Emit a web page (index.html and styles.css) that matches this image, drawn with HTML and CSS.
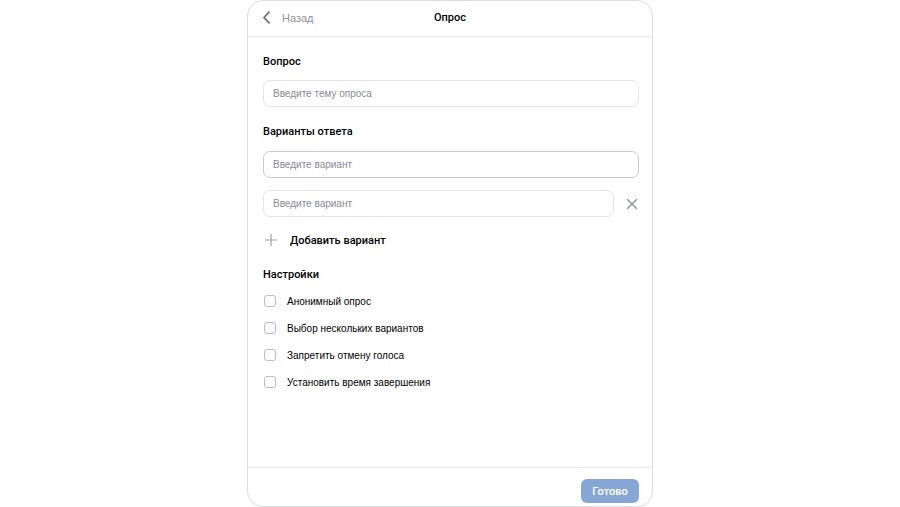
FILE: index.html
```html
<!DOCTYPE html>
<html lang="ru">
<head>
<meta charset="utf-8">
<title>Опрос</title>
<link rel="stylesheet" href="styles.css">
</head>
<body>
<div class="panel">
  <header class="header">
    <div class="back">
      <svg class="chev" width="9" height="13" viewBox="0 0 9 13"><path d="M7 1.2 L2 6.5 L7 11.8" fill="none" stroke="#6d7178" stroke-width="1.8" stroke-linecap="round" stroke-linejoin="round"/></svg>
      <span>Назад</span>
    </div>
    <div class="title">Опрос</div>
  </header>
  <main class="content">
    <div class="label first">Вопрос</div>
    <div class="input">Введите тему опроса</div>
    <div class="label">Варианты ответа</div>
    <div class="input focused">Введите вариант</div>
    <div class="option-row">
      <div class="input grow">Введите вариант</div>
      <svg class="remove" width="12" height="12" viewBox="0 0 12 12"><path d="M1.5 1.5 L10.5 10.5 M10.5 1.5 L1.5 10.5" stroke="#8a8e95" stroke-width="1.3" stroke-linecap="round"/></svg>
    </div>
    <div class="add">
      <svg class="plus" width="12" height="12" viewBox="0 0 12 12"><path d="M6 0.5 V11.5 M0.5 6 H11.5" stroke="#9a9ea5" stroke-width="1.2" stroke-linecap="round"/></svg>
      <span>Добавить вариант</span>
    </div>
    <div class="label settings">Настройки</div>
    <div class="check first-check"><span class="box"></span><span>Анонимный опрос</span></div>
    <div class="check"><span class="box"></span><span>Выбор нескольких вариантов</span></div>
    <div class="check"><span class="box"></span><span>Запретить отмену голоса</span></div>
    <div class="check"><span class="box"></span><span>Установить время завершения</span></div>
  </main>
  <footer class="footer">
    <button class="done">Готово</button>
  </footer>
</div>
</body>
</html>
```
FILE: styles.css
```css
* { box-sizing: border-box; }
html, body { margin: 0; padding: 0; background: #fff; }
body {
  font-family: "Liberation Sans", Arial, sans-serif;
  color: #000;
  height: 507px;
  overflow: hidden;
}
.panel {
  width: 406px;
  height: 507px;
  margin: 0 auto;
  border: 1px solid #dcdde0;
  border-radius: 16px;
  display: flex;
  flex-direction: column;
  background: #fff;
}
.header {
  height: 36px;
  flex: none;
  border-bottom: 1px solid #e7e8ea;
  display: flex;
  align-items: center;
  position: relative;
  padding: 0 0 2px 14px;
}
.back {
  display: flex;
  align-items: center;
  gap: 11px;
  color: #8f939a;
  font-size: 11px;
}
.title {
  position: absolute;
  left: 0;
  right: 0;
  top: 0;
  height: 33px;
  line-height: 33px;
  text-align: center;
  font-family: Roboto, "Liberation Sans", sans-serif;
  font-size: 11px;
  font-weight: 500;
  pointer-events: none;
}
.content {
  flex: 1;
  padding: 0 13px 0 15px;
  display: flex;
  flex-direction: column;
}
.label {
  font-family: Roboto, "Liberation Sans", sans-serif;
  font-size: 11px;
  font-weight: 500;
  line-height: 16px;
  margin: 17px 0 11px;
}
.label.first { margin-top: 17px; margin-bottom: 10px; }
.label.settings { margin-top: 19px; margin-bottom: 0; }
.input {
  height: 27px;
  border: 1px solid #e3e4e7;
  border-radius: 7px;
  padding-left: 9px;
  display: flex;
  align-items: center;
  font-size: 10px;
  color: #878b93;
}
.input.focused { border-color: #c8cbd0; }
.option-row {
  margin-top: 12px;
  display: flex;
  align-items: center;
}
.input.grow { flex: 1; }
.remove { margin: 0 1px 0 12px; }
.add {
  margin-top: 15px;
  height: 16px;
  display: flex;
  align-items: center;
  gap: 13px;
  padding-left: 2px;
  font-family: Roboto, "Liberation Sans", sans-serif;
  font-size: 11px;
  font-weight: 500;
}
.check {
  margin-top: 11px;
  height: 16px;
  display: flex;
  align-items: center;
  gap: 11px;
  padding-left: 1px;
  font-size: 10px;
}
.check.first-check { margin-top: 10px; }
.box {
  width: 12px;
  height: 12px;
  border: 1px solid #b9bcc2;
  border-radius: 3px;
}
.footer {
  flex: none;
  border-top: 1px solid #e7e8ea;
  padding: 11px 13px 3px;
  display: flex;
  justify-content: flex-end;
}
.done {
  width: 58px;
  height: 24px;
  border: none;
  border-radius: 6px;
  background: #86a7d5;
  color: #fff;
  font-family: Roboto, "Liberation Sans", sans-serif;
  font-size: 11px;
  font-weight: 500;
}
```
